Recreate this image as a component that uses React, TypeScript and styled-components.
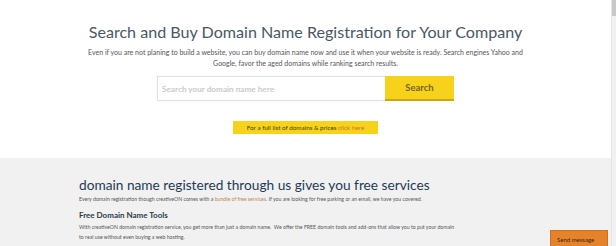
import React from "react";
import styled, { createGlobalStyle } from "styled-components";

const Global = createGlobalStyle`
  html, body { margin: 0; padding: 0; background: #fff; overflow: hidden; }
  body { font-family: Lato, "Open Sans", sans-serif; }
`;

const Page = styled.div`
  display: flex;
  width: 616px;
  height: 246px;
  overflow: hidden;
  position: relative;
`;

const Main = styled.div`
  flex: 1;
  display: flex;
  flex-direction: column;
  min-width: 0;
`;

const Scrollbar = styled.div`
  width: 4px;
  background: #f1f1f1;
  border-left: 1px solid #e4e4e4;
  display: flex;
  flex-direction: column;
`;

const Thumb = styled.div`
  height: 16px;
  background: #c9c9c9;
`;

const Hero = styled.section`
  background: #fff;
  height: 158px;
  display: flex;
  flex-direction: column;
  align-items: center;
  padding-top: 20px;
  box-sizing: border-box;
`;

const Title = styled.h1`
  margin: 0;
  font-size: 16.1px;
  line-height: 24px;
  font-weight: 400;
  color: #485865;
`;

const Lead = styled.p`
  margin: 3px 0 0;
  width: 450px;
  text-align: center;
  font-size: 7px;
  line-height: 11px;
  color: #555;
`;

const SearchRow = styled.div`
  display: flex;
  margin-top: 7px;
  height: 25px;
`;

const Input = styled.input`
  width: 228px;
  box-sizing: border-box;
  border: 1px solid #e2e2e2;
  border-right: none;
  box-shadow: 0 0 2px rgba(0, 0, 0, 0.06);
  padding: 0 4px;
  font-family: inherit;
  font-size: 8.2px;
  font-weight: 700;
  color: #555;
  outline: none;
  &::placeholder { color: #cacaca; }
`;

const SearchButton = styled.button`
  width: 69px;
  border: none;
  border-bottom: 2px solid #c9a716;
  background: #f6d21a;
  color: #7a6420;
  font-family: inherit;
  font-size: 9.5px;
  font-weight: 700;
  padding: 0;
`;

const PriceLink = styled.div`
  margin-top: 20px;
  height: 13px;
  width: 145px;
  background: #f6d21a;
  display: flex;
  align-items: center;
  justify-content: center;
  font-size: 6.3px;
  color: #4a4020;
`;

const Accent = styled.span<{ $tone?: string }>`
  color: ${(p) => p.$tone || "#d0722a"};
`;

const Services = styled.section`
  flex: 1;
  background: #f1f1f1;
  padding: 18px 0 0 79px;
  position: relative;
`;

const SubTitle = styled.h2`
  margin: 0;
  font-size: 13.7px;
  line-height: 18px;
  font-weight: 400;
  color: #1f3a56;
`;

const Text = styled.p`
  margin: 0;
  font-size: 5.2px;
  line-height: 10px;
  color: #555;
  max-width: 378px;
`;

const ToolsTitle = styled.h3`
  margin: 5px 0 1px;
  font-size: 8px;
  line-height: 12px;
  font-weight: 700;
  color: #2b3a48;
`;

const SendMessage = styled.div`
  position: absolute;
  right: 3px;
  bottom: -2px;
  width: 58px;
  height: 18px;
  background: #e5832a;
  border: 1px solid #d27018;
  box-sizing: border-box;
  font-size: 6px;
  color: #3a2810;
  display: flex;
  align-items: center;
  padding-left: 6px;
`;

export default function App() {
  return (
    <Page>
      <Global />
      <Main>
        <Hero>
          <Title>Search and Buy Domain Name Registration for Your Company</Title>
          <Lead>
            Even if you are not planing to build a website, you can buy domain name now and use it when your website is ready. Search engines Yahoo and Google, favor the aged domains while ranking search results.
          </Lead>
          <SearchRow>
            <Input placeholder="Search your domain name here" />
            <SearchButton>Search</SearchButton>
          </SearchRow>
          <PriceLink>
            For a full list of domains &amp; prices&nbsp;<Accent>click here</Accent>
          </PriceLink>
        </Hero>
        <Services>
          <SubTitle>domain name registered through us gives you free services</SubTitle>
          <Text>
            Every domain registration though creativeON comes with a <Accent $tone="#b88a52">bundle of free services</Accent>. If you are looking for free parking or an email, we have you covered.
          </Text>
          <ToolsTitle>Free Domain Name Tools</ToolsTitle>
          <Text>
            With creativeON domain registration service, you get more than just a domain name.&nbsp; We offer the FREE domain tools and add-ons that allow you to put your domain to real use without even buying a web hosting.
          </Text>
          <SendMessage>Send message</SendMessage>
        </Services>
      </Main>
      <Scrollbar>
        <Thumb />
      </Scrollbar>
    </Page>
  );
}
